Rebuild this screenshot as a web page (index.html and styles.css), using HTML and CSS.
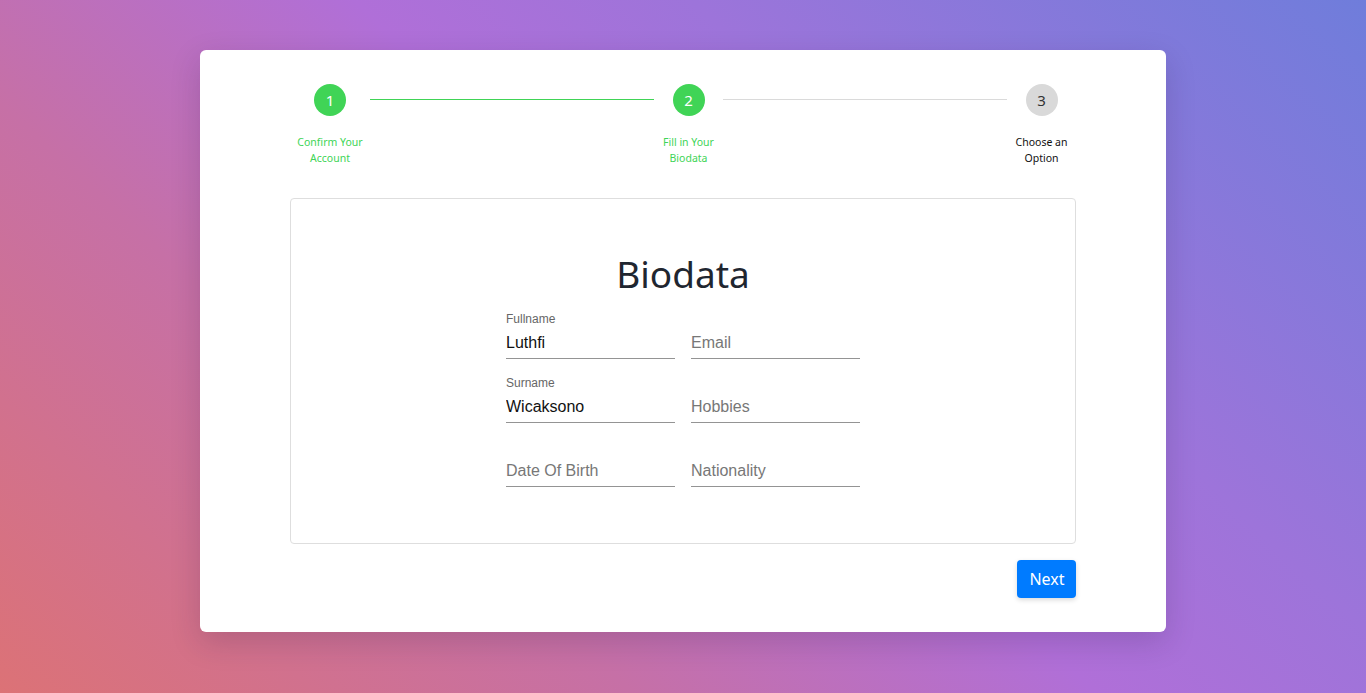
FILE: index.html
```html
<!DOCTYPE html>
<html lang="en">
<head>
<meta charset="utf-8">
<title>Biodata</title>
<link rel="stylesheet" href="styles.css">
</head>
<body>
<main class="card">
  <div class="stepper">
    <div class="step step-1 done">
      <div class="dot">1</div>
      <div class="step-label">Confirm Your<br>Account</div>
    </div>
    <div class="bar done"></div>
    <div class="step step-2 done">
      <div class="dot">2</div>
      <div class="step-label">Fill in Your<br>Biodata</div>
    </div>
    <div class="bar"></div>
    <div class="step step-3">
      <div class="dot">3</div>
      <div class="step-label">Choose an<br>Option</div>
    </div>
  </div>

  <section class="panel">
    <h1 class="title">Biodata</h1>
    <form class="form">
      <div class="field">
        <label class="field-label">Fullname</label>
        <input class="field-input" type="text" value="Luthfi">
      </div>
      <div class="field">
        <label class="field-label"></label>
        <input class="field-input" type="text" placeholder="Email">
      </div>
      <div class="field">
        <label class="field-label">Surname</label>
        <input class="field-input" type="text" value="Wicaksono">
      </div>
      <div class="field">
        <label class="field-label"></label>
        <input class="field-input" type="text" placeholder="Hobbies">
      </div>
      <div class="field">
        <label class="field-label"></label>
        <input class="field-input" type="text" placeholder="Date Of Birth">
      </div>
      <div class="field">
        <label class="field-label"></label>
        <input class="field-input" type="text" placeholder="Nationality">
      </div>
    </form>
  </section>

  <div class="actions">
    <button class="btn-next" type="button">Next</button>
  </div>
</main>
</body>
</html>
```

FILE: styles.css
```css
* { box-sizing: border-box; }

html, body {
  height: 100%;
}

body {
  margin: 0;
  background: linear-gradient(43deg, #dc7276 0%, #c670a6 30%, #b06fd8 52%, #9d74da 68%, #6f7ddb 100%);
  font-family: "Noto Sans", "Open Sans", sans-serif;
  display: flex;
  justify-content: center;
  align-items: flex-start;
}

.card {
  margin-top: 50px;
  width: 966px;
  background: #fff;
  border-radius: 6px;
  padding: 34px 90px;
  box-shadow: 0 10px 30px rgba(40, 20, 60, 0.18);
}

.stepper {
  display: flex;
  align-items: flex-start;
}

.step {
  display: flex;
  flex-direction: column;
  align-items: center;
}

.step-1 { width: 80px; }
.step-2 { width: 69px; }
.step-3 { width: 69px; }

.dot {
  width: 32px;
  height: 32px;
  border-radius: 50%;
  background: #d9d9d9;
  color: #333;
  font-size: 15px;
  display: flex;
  align-items: center;
  justify-content: center;
}

.step.done .dot {
  background: #40d456;
  color: #fff;
}

.step-label {
  margin-top: 18px;
  font-size: 10.5px;
  line-height: 16px;
  text-align: center;
  color: #111;
  white-space: nowrap;
}

.step.done .step-label {
  color: #40d456;
}

.bar {
  flex: 1;
  height: 1px;
  margin-top: 15px;
  background: #dadada;
}

.bar.done {
  background: #40d456;
}

.panel {
  margin-top: 32px;
  border: 1px solid #dedede;
  border-radius: 4px;
  height: 346px;
  padding-top: 51px;
  display: flex;
  flex-direction: column;
  align-items: center;
}

.title {
  margin: 0 0 12px;
  font-size: 37px;
  line-height: 48px;
  font-weight: 400;
  color: #1f2630;
}

.form {
  display: grid;
  grid-template-columns: 169px 169px;
  column-gap: 16px;
  row-gap: 15px;
}

.field {
  display: flex;
  flex-direction: column;
  height: 49px;
}

.field-label {
  height: 18px;
  padding-top: 2px;
  font-family: "Liberation Sans", Arial, sans-serif;
  font-size: 12px;
  line-height: 14px;
  color: #666;
}

.field-input {
  height: 31px;
  border: 0;
  border-bottom: 1px solid #949494;
  padding: 0;
  margin: 0;
  outline: none;
  background: transparent;
  font-family: "Liberation Sans", Arial, sans-serif;
  font-size: 16px;
  color: #111;
}

.field-input::placeholder {
  color: #777;
}

.actions {
  margin-top: 16px;
  display: flex;
  justify-content: flex-end;
}

.btn-next {
  width: 59px;
  height: 38px;
  border: 0;
  border-radius: 4px;
  background: #007bff;
  color: #fff;
  font-family: "Noto Sans", "Open Sans", sans-serif;
  font-size: 16px;
  box-shadow: 0 2px 5px rgba(0, 0, 0, 0.15);
  padding: 0 0 0 1px;
}
```
